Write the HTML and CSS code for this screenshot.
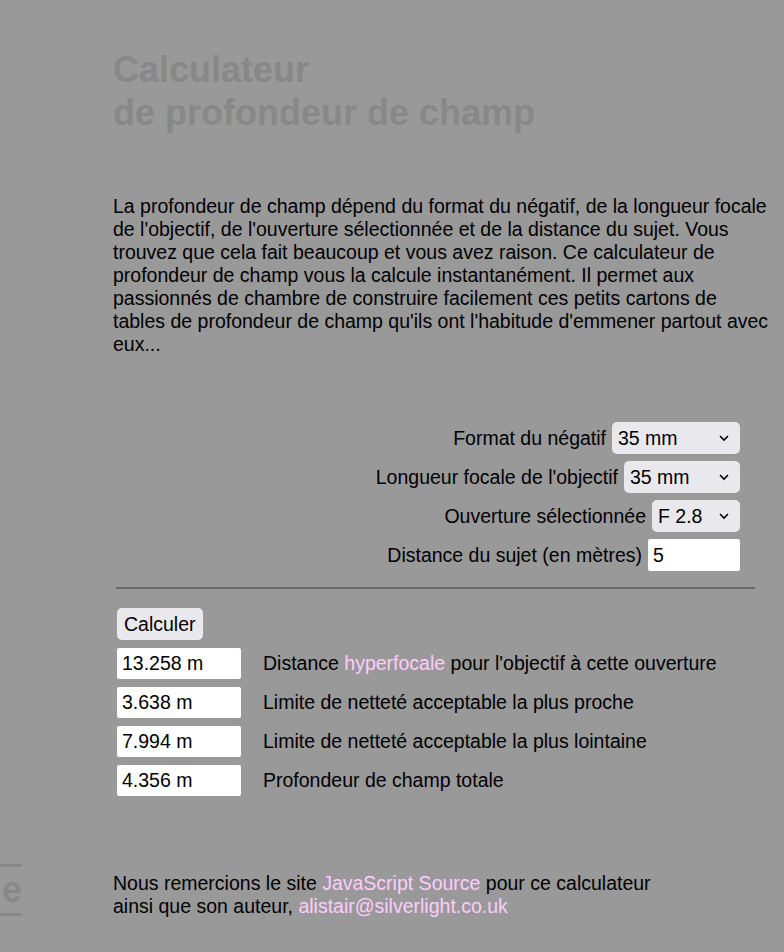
FILE: index.html
```html
<!DOCTYPE html>
<html lang="fr">
<head>
  <meta charset="UTF-8" />
  <title>Calculateur de profondeur de champ</title>
  <link rel="stylesheet" href="styles.css">
</head>
<body>

  <div class="page">
    <h1>Calculateur<br>de profondeur de champ</h1>

    <p class="intro">
      La profondeur de champ dépend du format du négatif, de la longueur focale
      de l'objectif, de l'ouverture sélectionnée et de la distance du sujet. Vous
      trouvez que cela fait beaucoup et vous avez raison. Ce calculateur de
      profondeur de champ vous la calcule instantanément. Il permet aux
      passionnés de chambre de construire facilement ces petits cartons de
      tables de profondeur de champ qu'ils ont l'habitude d'emmener partout avec
      eux...
    </p>

    <!-- Settings: film format, lens, aperture, subject distance -->
    <form class="settings" onsubmit="return false;">
      <label class="row">Format du négatif
        <select id="format" class="sel w-128">
          <option>35 mm</option>
          <option>6x6</option>
          <option>4x5</option>
        </select>
      </label>
      <label class="row">Longueur focale de l'objectif
        <select id="focal" class="sel w-116">
          <option>35 mm</option>
          <option>50 mm</option>
          <option>90 mm</option>
        </select>
      </label>
      <label class="row">Ouverture sélectionnée
        <select id="fstop" class="sel w-88">
          <option>F 2.8</option>
          <option>F 4</option>
          <option>F 5.6</option>
        </select>
      </label>
      <label class="row">Distance du sujet (en mètres)
        <input type="text" id="dist" class="field w-92" value="5">
      </label>
    </form>

    <hr>

    <!-- Results -->
    <div class="results">
      <div><button class="calc" onclick="calc()">Calculer</button></div>
      <div class="res"><input class="field out" id="hyper" value="13.258 m"><span>Distance <a href="#">hyperfocale</a> pour l'objectif à cette ouverture</span></div>
      <div class="res"><input class="field out" id="near" value="3.638 m"><span>Limite de netteté acceptable la plus proche</span></div>
      <div class="res"><input class="field out" id="far" value="7.994 m"><span>Limite de netteté acceptable la plus lointaine</span></div>
      <div class="res"><input class="field out" id="total" value="4.356 m"><span>Profondeur de champ totale</span></div>
    </div>

    <p class="thanks">
      Nous remercions le site <a href="#">JavaScript Source</a> pour ce calculateur<br>
      ainsi que son auteur, <a href="#">alistair@silverlight.co.uk</a>
    </p>
  </div>

  <!-- side tab, mostly off screen -->
  <div class="sidetab">e</div>

  <script>
    function calc() {
    }
  </script>
</body>
</html>
```

FILE: styles.css
```css
body {
  margin: 0;
  background-color: #999999;
  color: #000;
  font-family: "Liberation Sans", Arial, sans-serif;
  font-size: 19.5px;
  line-height: 23px;
}

.page {
  margin-left: 113px;
  width: 657px;
  padding-top: 48px;
  padding-bottom: 20px;
}

h1 {
  margin: 0;
  font-size: 36px;
  line-height: 43px;
  font-weight: bold;
  color: #888888;
}

.intro {
  margin: 61px 0 0 0;
}

a {
  color: #ffccff;
  text-decoration: none;
}

/* Settings form, right aligned */
.settings {
  margin-top: 66px;
  padding-right: 30px;
  display: flex;
  flex-direction: column;
  align-items: flex-end;
  gap: 7px;
}

.row {
  display: flex;
  align-items: center;
  gap: 6px;
  height: 32px;
}

.sel {
  height: 32px;
  border: none;
  border-radius: 5px;
  background-color: #e9e9ed;
  font-family: "Liberation Sans", Arial, sans-serif;
  font-size: 19.5px;
  padding: 0 6px;
  color: #000;
  appearance: none;
  background-image: url("data:image/svg+xml,%3Csvg xmlns='http://www.w3.org/2000/svg' width='12' height='8'%3E%3Cpath d='M2 2l4 4 4-4' fill='none' stroke='%23000' stroke-width='1.6'/%3E%3C/svg%3E");
  background-repeat: no-repeat;
  background-position: right 10px center;
}

.w-128 { width: 128px; }
.w-116 { width: 116px; }
.w-88 { width: 88px; }
.w-92 { width: 92px; }

.field {
  box-sizing: border-box;
  height: 32px;
  border: none;
  border-radius: 2px;
  background: #ffffff;
  font-family: "Liberation Sans", Arial, sans-serif;
  font-size: 19.5px;
  padding: 0 5px;
  color: #000;
}

hr {
  margin: 16px 15px 0 3px;
  border: none;
  border-top: 2px solid #6a6a6a;
}

/* Results block */
.results {
  margin-top: 19px;
  margin-left: 4px;
  display: flex;
  flex-direction: column;
  gap: 8px;
}

.calc {
  height: 32px;
  padding: 0 7px;
  border: none;
  border-radius: 5px;
  background-color: #e9e9ed;
  font-family: "Liberation Sans", Arial, sans-serif;
  font-size: 19.5px;
  color: #000;
}

.res {
  display: flex;
  align-items: center;
  gap: 22px;
}

.out {
  width: 124px;
  height: 31px;
}

.thanks {
  margin: 76px 0 0 0;
}

/* little tab clipped by the window edge */
.sidetab {
  position: fixed;
  left: -30px;
  top: 864px;
  width: 52px;
  height: 46px;
  border-top: 3px solid #888;
  border-bottom: 3px solid #888;
  color: #888;
  font-weight: bold;
  font-size: 36px;
  line-height: 46px;
  text-align: right;
  box-sizing: content-box;
}
```
